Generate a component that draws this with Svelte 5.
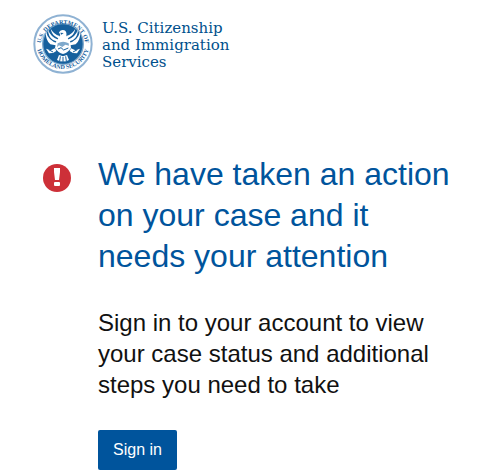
<script>
    // feathers of the left wing, mirrored for the right one
    let feathers = [
        "M53 72 Q51 96 66 110 L90 114 L88 106 Q60 100 53 72Z",
        "M59 66 Q60 88 74 97 L90 103 L90 96 Q67 88 59 66Z",
        "M67 63 Q70 79 80 86 L92 93 L94 85 Q76 80 67 63Z",
    ];
</script>

<header>
    <a class="logo" href="/">
        <svg class="seal" viewBox="14 19 180 180" role="img" aria-label="Department of Homeland Security seal">
            <defs>
                <path id="ring-top" d="M37 116 A67 67 0 1 1 171 116" />
                <path id="ring-bottom" d="M24 104 A80 80 0 0 0 184 104" />
            </defs>
            <circle cx="104" cy="109" r="86" fill="#fff" stroke="#8fb2d3" stroke-width="6" />
            <circle cx="104" cy="109" r="61" fill="#16609d" stroke="#7fa9cc" stroke-width="4" />
            <text class="ring"><textPath href="#ring-top" startOffset="50%">U.S. DEPARTMENT OF</textPath></text>
            <text class="ring"><textPath href="#ring-bottom" startOffset="50%">HOMELAND SECURITY</textPath></text>

            <g fill="#fff">
                {#each feathers as d}
                    <path {d} />
                    <path {d} transform="translate(208 0) scale(-1 1)" />
                {/each}
                <!-- head and neck -->
                <path d="M92 74 Q98 65 108 68 Q116 72 114 84 L121 96 L104 100 L87 96 L96 82Z" />
                <!-- shield -->
                <path d="M84 99 Q104 88 125 99 L128 121 Q118 136 104 139 Q90 136 80 121Z" />
                <!-- olive branch and arrows -->
                <path d="M80 122 L67 128 L53 123 L62 137 L74 136 L84 130Z" />
                <path d="M128 122 L141 128 L155 123 L146 137 L134 136 L124 130Z" />
                <!-- tail -->
                <path d="M92 142 L104 146 L116 142 L122 157 Q104 166 86 157Z" />
            </g>
            <path d="M96 75 L106 76 L99 81Z" fill="#16609d" />
            <path d="M88 107 Q104 97 121 107 L122 114 L111 111 L102 118 L92 113 L86 119Z" fill="#7fa9cc" />
            <path d="M89 124 L98 120 L106 127 L120 121 M96 146 L94 160 M104 148 V163 M112 146 L114 160 M61 126 L74 133 M147 126 L134 133" fill="none" stroke="#16609d" stroke-width="3" />
        </svg>
        <span class="agency">
            U.S. Citizenship<br />
            and Immigration<br />
            Services
        </span>
    </a>
</header>

<main>
    <svg class="alert" viewBox="0 0 28 28" role="img" aria-label="Alert">
        <circle cx="14" cy="14" r="14" fill="#cd3038" />
        <path d="M11 4 H17 V8 L16 16 H12 L11 8Z" fill="#fff" />
        <rect x="11" y="18" width="6" height="4" rx="1" fill="#fff" />
    </svg>
    <div class="notice">
        <h1>We have taken an action on your case and it needs your attention</h1>
        <p>Sign in to your account to view your case status and additional steps you need to take</p>
        <button type="button">Sign in</button>
    </div>
</main>

<style>
    :global(body) {
        background: #fff;
        font-family: "Liberation Sans", Arial, sans-serif;
    }

    header {
        display: flex;
        padding: 14px 33px 0;
    }

    .logo {
        display: flex;
        align-items: center;
        gap: 9px;
        color: #00508c;
        text-decoration: none;
    }

    .seal {
        width: 60px;
        height: 60px;
    }

    .ring {
        font-family: "Liberation Serif", serif;
        font-size: 18px;
        font-weight: bold;
        text-anchor: middle;
        fill: #16609d;
    }

    .agency {
        padding-top: 2px;
        font-family: "DejaVu Serif", serif;
        font-size: 15px;
        line-height: 17px;
        white-space: nowrap;
    }

    main {
        display: flex;
        align-items: flex-start;
        gap: 27px;
        padding: 80px 36px 6px 43px;
    }

    .alert {
        flex: none;
        width: 28px;
        height: 28px;
        margin-top: 10px;
    }

    .notice {
        max-width: 360px;
    }

    h1 {
        margin: 0 0 30px;
        color: #00549c;
        font-size: 32px;
        font-weight: normal;
        line-height: 41px;
    }

    p {
        margin: 0 0 30px;
        color: #111;
        font-size: 24px;
        line-height: 31px;
    }

    button {
        padding: 0 15px;
        border: 0;
        border-radius: 2px;
        background: #00549c;
        color: #fff;
        font-family: inherit;
        font-size: 16px;
        line-height: 40px;
        cursor: pointer;
    }
</style>
